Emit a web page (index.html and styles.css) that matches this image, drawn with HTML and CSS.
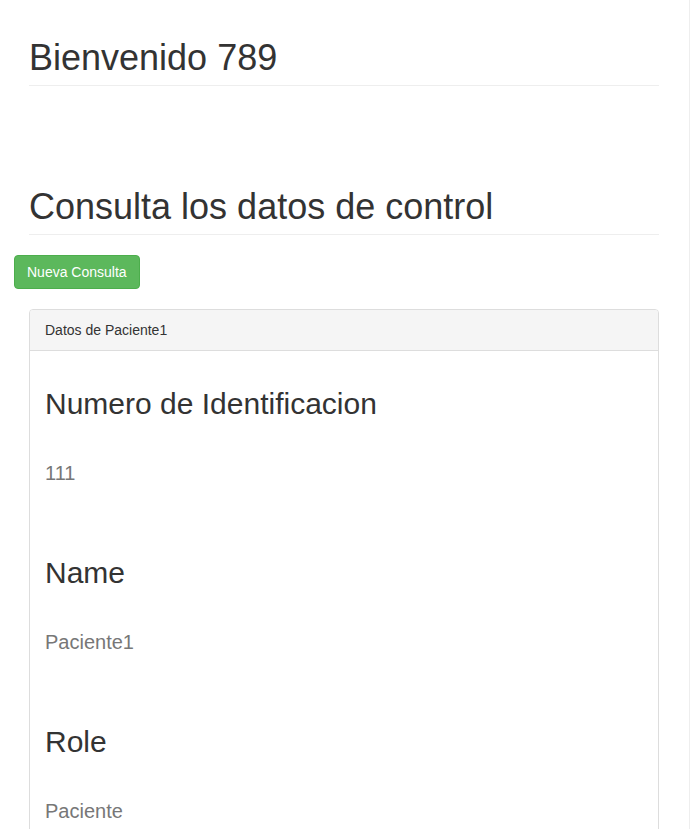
FILE: index.html
```html
<!DOCTYPE html>
<html lang="es">
<head>
<meta charset="utf-8">
<meta name="viewport" content="width=device-width, initial-scale=1">
<title>Datos de control</title>
<link rel="stylesheet" href="styles.css">
</head>
<body>
<main class="page">
  <header class="page-header"><h1>Bienvenido 789</h1></header>
  <section>
    <header class="page-header section-header"><h1>Consulta los datos de control</h1></header>
    <div class="row"><button class="btn" type="button">Nueva Consulta</button></div>
    <article class="panel">
      <div class="panel-heading">Datos de Paciente1</div>
      <div class="panel-body">
        <h2>Numero de Identificacion</h2>
        <p class="value">111</p>
        <h2>Name</h2>
        <p class="value">Paciente1</p>
        <h2>Role</h2>
        <p class="value">Paciente</p>
      </div>
    </article>
  </section>
</main>
</body>
</html>
```
FILE: styles.css
```css
* { box-sizing: border-box; }
body {
  margin: 0;
  min-height: 100vh;
  border-right: 1px solid #eee;
  color: #333;
  background: #fff;
  font: 14px/20px "Liberation Sans", Arial, sans-serif;
}
.page { padding: 38px 30px 0 29px; }
.page-header { padding-bottom: 7px; border-bottom: 1px solid #eee; }
h1 { margin: 0; font-size: 36px; font-weight: 400; line-height: 40px; }
.section-header { margin-top: 101px; }
.row { display: flex; margin: 20px -15px; }
.btn {
  height: 34px;
  padding: 6px 12px;
  border: 1px solid #4cae4c;
  border-radius: 4px;
  color: #fff;
  background: #5cb85c;
  font: inherit;
  cursor: pointer;
}
.panel { border: 1px solid #ddd; border-radius: 4px; }
.panel-heading {
  padding: 10px 15px;
  border-bottom: 1px solid #ddd;
  border-radius: 3px 3px 0 0;
  background: #f5f5f5;
}
.panel-body { padding: 36px 15px 15px; }
h2 { margin: 0; font-size: 30px; font-weight: 400; line-height: 33px; }
.value { margin: 41px 0 71px; color: #777; font-size: 20px; line-height: 24px; }
.value:last-child { margin-bottom: 0; }
```
